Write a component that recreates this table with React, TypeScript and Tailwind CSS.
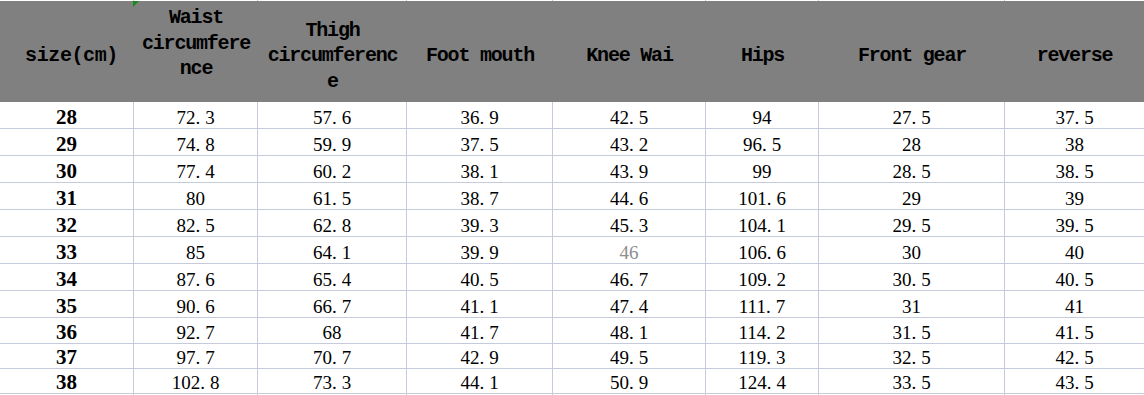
import React from "react";

const COLS =
  "grid grid-cols-[134px_124px_149px_146px_153px_113px_186px_139px]";

const rows: string[][] = [
  ["28", "72.3", "57.6", "36.9", "42.5", "94", "27.5", "37.5"],
  ["29", "74.8", "59.9", "37.5", "43.2", "96.5", "28", "38"],
  ["30", "77.4", "60.2", "38.1", "43.9", "99", "28.5", "38.5"],
  ["31", "80", "61.5", "38.7", "44.6", "101.6", "29", "39"],
  ["32", "82.5", "62.8", "39.3", "45.3", "104.1", "29.5", "39.5"],
  ["33", "85", "64.1", "39.9", "46", "106.6", "30", "40"],
  ["34", "87.6", "65.4", "40.5", "46.7", "109.2", "30.5", "40.5"],
  ["35", "90.6", "66.7", "41.1", "47.4", "111.7", "31", "41"],
  ["36", "92.7", "68", "41.7", "48.1", "114.2", "31.5", "41.5"],
  ["37", "97.7", "70.7", "42.9", "49.5", "119.3", "32.5", "42.5"],
  ["38", "102.8", "73.3", "44.1", "50.9", "124.4", "33.5", "43.5"],
];

const headers: React.ReactNode[] = [
  "size(cm)",
  <>
    Waist
    <br />
    circumfere
    <br />
    nce
    <br />
    &nbsp;
  </>,
  <>
    Thigh
    <br />
    circumferenc
    <br />e
  </>,
  "Foot mouth",
  "Knee Wai",
  "Hips",
  "Front gear",
  "reverse",
];

function Strip({ h }: { h: string }) {
  return (
    <div className={`${COLS} ${h}`}>
      {Array.from({ length: 8 }).map((_, i) => (
        <div key={i} className={i < 7 ? "border-r border-[#c5cbdb]" : ""} />
      ))}
    </div>
  );
}

function Num({ v }: { v: string }) {
  const parts = v.split(".");
  if (parts.length === 1) return <span>{v}</span>;
  return (
    <span>
      {parts[0]}
      <span className="mr-[5px]">.</span>
      {parts[1]}
    </span>
  );
}

export default function App() {
  return (
    <div className="w-[1144px] h-[395px] overflow-hidden bg-white">
      <Strip h="h-px" />
      <div
        className={`${COLS} h-[101px] bg-[#808080] text-black font-bold text-[20px] tracking-[-1.2px] leading-[25.5px] relative`}
        style={{ fontFamily: '"Liberation Mono", "Noto Sans CJK SC", monospace' }}
      >
        {headers.map((h, i) => (
          <div
            key={i}
            className={`flex items-center justify-center text-center whitespace-nowrap pt-[4px] ${i === 0 ? "pl-[9px] tracking-[-0.4px]" : ""}`}
          >
            <span>{h}</span>
          </div>
        ))}
        <div className="absolute left-[133px] top-0 w-0 h-0 border-t-[6px] border-r-[6px] border-t-[#1a8a1a] border-r-transparent" />
      </div>
      {rows.map((r, ri) => (
        <div key={ri} className={`${COLS} ${ri < 8 ? "h-[27px]" : "h-[25px]"}`}>
          {r.map((v, ci) => {
            const border =
              ci < 7
                ? "border-r border-b border-[#c5cbdb]"
                : "border-b border-[#c5cbdb]";
            if (ci === 0) {
              return (
                <div
                  key={ci}
                  className={`${border} flex items-center justify-center pt-1 leading-none font-bold text-[21px] text-black`}
                  style={{ fontFamily: '"Liberation Serif", serif' }}
                >
                  {v}
                </div>
              );
            }
            const gray = ri === 5 && ci === 4;
            return (
              <div
                key={ci}
                className={`${border} flex items-center justify-center pt-1 leading-none text-[19px] ${gray ? "text-[#8e8e8e]" : "text-black"}`}
                style={{ fontFamily: '"Liberation Serif", serif' }}
              >
                {gray ? v : <Num v={v} />}
              </div>
            );
          })}
        </div>
      ))}
      <Strip h="h-[2px]" />
    </div>
  );
}
